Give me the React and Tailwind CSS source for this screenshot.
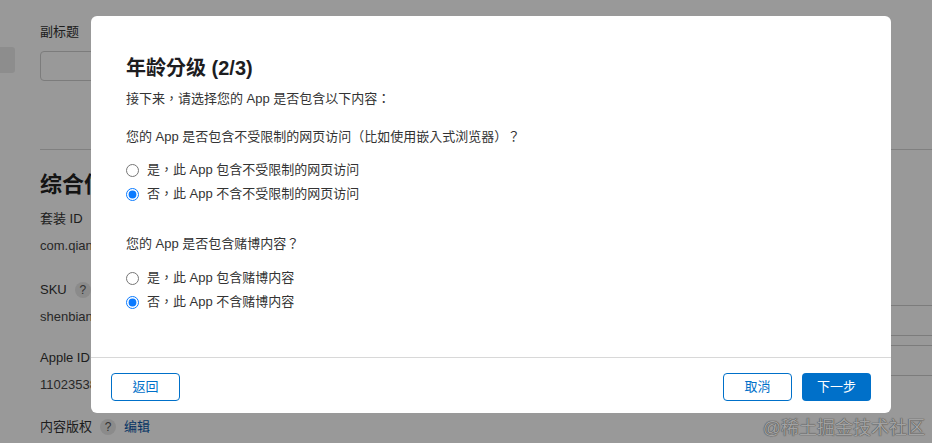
import React from 'react'

// ── Background page (dimmed behind the modal) ───────────────────

function Field({ label, value, help, link, className = '' }) {
  return (
    <div className={className}>
      <div className="flex items-center gap-2 h-[20px] text-[13px] text-[#333]">
        <span>{label}</span>
        {help && (
          <span className="w-[16px] h-[16px] rounded-full bg-[#e8e8e8] text-[12px] text-[#555] flex items-center justify-center">?</span>
        )}
        {link && <span className="text-[#0a58a8]">{link}</span>}
      </div>
      {value && <div className="mt-[7px] h-[20px] text-[13px] text-[#444]">{value}</div>}
    </div>
  )
}

function BackgroundPage() {
  return (
    <div className="flex w-full h-full bg-white">
      <div className="w-[15px] shrink-0 pt-[47px]">
        <div className="h-[26px] bg-[#ececec] rounded-r-[3px]" />
      </div>
      <div className="flex-1 pl-[25px] pt-[22px]">
        <div className="text-[13px] text-[#333] h-[20px]">副标题</div>
        <div className="mt-[9px] h-[30px] w-[600px] border border-[#cfcfcf] rounded-[4px]" />
        <div className="mt-[68px] border-t border-[#d6d6d6]" />
        <div className="grid grid-cols-[440px_1fr]">
          <div>
            <div className="mt-[21px] text-[22px] font-bold text-[#222] leading-[28px]">综合信息</div>
            <Field className="mt-[10px]" label="套装 ID" value="com.qianfan.shenbian" />
            <Field className="mt-[24px]" label="SKU" help value="shenbianapp" />
            <Field className="mt-[21px]" label="Apple ID" value="1102353871" />
            <Field className="mt-[22px]" label="内容版权" help link="编辑" />
          </div>
          <div className="pt-[155px]">
            <div className="h-[31px] border border-[#cfcfcf] rounded-[4px] -mr-[20px]" />
            <div className="mt-[9px] h-[31px] border border-[#cfcfcf] rounded-[4px] -mr-[20px]" />
          </div>
        </div>
      </div>
    </div>
  )
}

// ── Modal ───────────────────────────────────────────────────────

function Radio({ checked, children }) {
  return (
    <label className="flex items-center h-[24px] text-[13px] text-[#333]">
      <input
        type="radio"
        readOnly
        checked={checked}
        className="w-[13px] h-[13px] m-0 accent-[#0a7aff]"
      />
      <span className="ml-[8px]">{children}</span>
    </label>
  )
}

const QUESTIONS = [
  {
    q: '您的 App 是否包含不受限制的网页访问（比如使用嵌入式浏览器）？',
    yes: '是，此 App 包含不受限制的网页访问',
    no: '否，此 App 不含不受限制的网页访问',
  },
  {
    q: '您的 App 是否包含赌博内容？',
    yes: '是，此 App 包含赌博内容',
    no: '否，此 App 不含赌博内容',
  },
]

function AgeRatingModal() {
  return (
    <div className="absolute left-[91px] top-[16px] w-[800px] h-[397px] bg-white rounded-[6px] flex flex-col overflow-hidden font-['Liberation_Sans','Noto_Sans_CJK_TC',sans-serif]">
      <div className="flex-1 px-[35px] pt-[38px]">
        <h2 className="text-[20px] font-bold leading-[28px] text-[#1d1d1f]">年龄分级 (2/3)</h2>
        <p className="mt-[7px] text-[13px] leading-[20px] text-[#333]">接下来，请选择您的 App 是否包含以下内容：</p>
        {QUESTIONS.map((item, i) => (
          <div key={i} className={i === 0 ? 'mt-[18px]' : 'mt-[28px]'}>
            <p className="text-[13px] leading-[20px] text-[#333]">{item.q}</p>
            <div className={i === 0 ? 'mt-[11px]' : 'mt-[12px]'}>
              <Radio checked={false}>{item.yes}</Radio>
              <Radio checked>{item.no}</Radio>
            </div>
          </div>
        ))}
      </div>
      <div className="h-[56px] border-t border-[#d8d8d8] px-[20px] pt-[15px] flex justify-between items-start">
        <button className="w-[69px] h-[28px] rounded-[4px] border border-[#0070c9] text-[#0070c9] text-[13px]">返回</button>
        <div className="flex gap-[10px]">
          <button className="w-[69px] h-[28px] rounded-[4px] border border-[#0070c9] text-[#0070c9] text-[13px]">取消</button>
          <button className="w-[69px] h-[28px] rounded-[4px] bg-[#0070c9] text-white text-[13px]">下一步</button>
        </div>
      </div>
    </div>
  )
}

// ── Main component ──────────────────────────────────────────────

export default function App() {
  return (
    <div className="relative w-[932px] h-[443px] overflow-hidden font-['Liberation_Sans','Noto_Sans_CJK_SC',sans-serif]">
      <BackgroundPage />
      <div className="absolute inset-0 bg-black/40" />
      <AgeRatingModal />
      <div className="absolute right-[7px] bottom-[3px] text-[18px] leading-[24px] text-[#a2a2a2] [text-shadow:0_0_1px_#4a4a4a,0_0_1px_#4a4a4a]">
        @稀土掘金技术社区
      </div>
    </div>
  )
}
